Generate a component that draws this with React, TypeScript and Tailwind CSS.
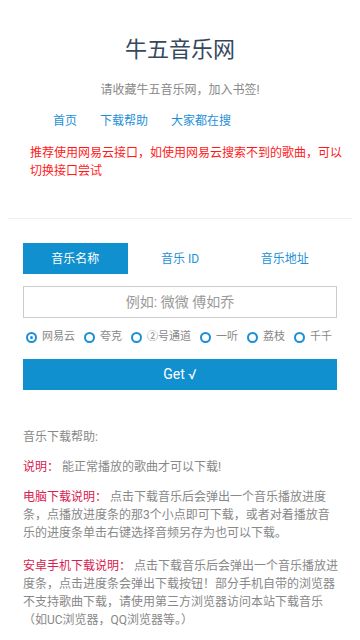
import { useState } from 'react';

const sources = ['网易云', '夸克', '②号通道', '一听', '荔枝', '千千'];
const tabs = ['音乐名称', '音乐 ID', '音乐地址'];

export default function App() {
    const [tab, setTab] = useState(0);
    const [source, setSource] = useState(0);
    const [keyword, setKeyword] = useState('');

    return (
        <div
            className="min-h-screen w-[360px] bg-white"
            style={{ fontFamily: 'Roboto, "Noto Sans CJK SC", sans-serif' }}
        >
            <div className="pt-[37px]">
                <h1 className="text-center text-[22px] leading-[26px] text-[#34495e]">牛五音乐网</h1>
                <p className="mt-[18px] text-center text-[12px] leading-[18px] text-[#888]">
                    请收藏牛五音乐网，加入书签!
                </p>
                <nav className="mt-[13px] flex gap-[23px] pl-[53px] text-[12px] leading-[18px] text-[#1e90d8]">
                    <a href="#">首页</a>
                    <a href="#">下载帮助</a>
                    <a href="#">大家都在搜</a>
                </nav>
                <p className="mt-[14px] w-[348px] pl-[30px] text-[12px] leading-[18px] text-[#ff1a1a]">
                    推荐使用网易云接口，如使用网易云搜索不到的歌曲，可以切换接口尝试
                </p>
            </div>

            <hr className="mx-2 mt-[38px] border-[#eee]" />

            <div className="px-[23px]">
                <div className="mt-[24px] grid grid-cols-3">
                    {tabs.map((t, i) => (
                        <button
                            key={t}
                            onClick={() => setTab(i)}
                            className={
                                i === tab
                                    ? 'h-[31px] bg-[#1190d0] text-[12px] text-white'
                                    : 'h-[31px] text-[12px] text-[#1e90d8]'
                            }
                        >
                            {t}
                        </button>
                    ))}
                </div>

                <input
                    type="text"
                    value={keyword}
                    onChange={(e) => setKeyword(e.target.value)}
                    placeholder="例如: 微微 傅如乔"
                    className="mt-[12px] block h-[32px] w-full border border-[#ccc] text-center text-[14px] text-[#555] outline-none placeholder:text-[#999]"
                />

                <div className="mt-[10px] flex h-[18px] items-center gap-[9px] pl-[3px] text-[11px] text-[#888]">
                    {sources.map((s, i) => (
                        <label key={s} className="flex items-center" onClick={() => setSource(i)}>
                            <span className="flex h-[11px] w-[11px] items-center justify-center rounded-full border-2 border-[#1a8fd8]">
                                {i === source && <span className="h-[3px] w-[3px] rounded-full bg-[#1a8fd8]" />}
                            </span>
                            <span className="ml-[5px]">{s}</span>
                        </label>
                    ))}
                </div>

                <button className="mt-[13px] h-[31px] w-full bg-[#1190d0] text-[14px] text-white">Get √</button>

                <div className="mt-[38px] w-[324px] pb-6 text-[12px] leading-[18px] text-[#888]">
                    <p className="mb-3">音乐下载帮助:</p>
                    <p className="mb-3">
                        <span className="text-[#d8204f]">说明：</span> 能正常播放的歌曲才可以下载!
                    </p>
                    <p className="mb-[15px]">
                        <span className="text-[#d8204f]">电脑下载说明：</span> 点击下载音乐后会弹出一个音乐播放进度
                        <br />
                        条，点播放进度条的那3个小点即可下载，或者对着播放音
                        <br />
                        乐的进度条单击右键选择音频另存为也可以下载。
                    </p>
                    <p>
                        <span className="text-[#d8204f]">安卓手机下载说明：</span> 点击下载音乐后会弹出一个音乐播放进
                        <br />
                        度条，点击进度条会弹出下载按钮！部分手机自带的浏览器
                        <br />
                        不支持歌曲下载，请使用第三方浏览器访问本站下载音乐
                        <br />
                        （如UC浏览器，QQ浏览器等。）
                    </p>
                </div>
            </div>
        </div>
    );
}
